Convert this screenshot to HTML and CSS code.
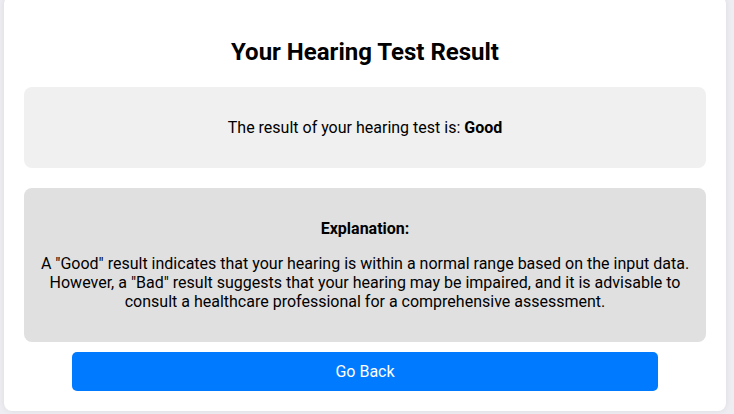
FILE: index.html
```html
<!DOCTYPE html>
<html lang="en">
<head>
<meta charset="utf-8">
<title>Your Hearing Test Result</title>
<link rel="stylesheet" href="styles.css">
</head>
<body>
  <div class="card">
    <h1 class="title">Your Hearing Test Result</h1>
    <div class="box result-box">
      <p>The result of your hearing test is: <strong>Good</strong></p>
    </div>
    <div class="box explain-box">
      <p><strong>Explanation:</strong></p>
      <p>A "Good" result indicates that your hearing is within a normal range based on the input data. However, a "Bad" result suggests that your hearing may be impaired, and it is advisable to consult a healthcare professional for a comprehensive assessment.</p>
    </div>
    <button class="back-btn" type="button">Go Back</button>
  </div>
</body>
</html>
```

FILE: styles.css
```css
html, body {
  margin: 0;
  padding: 0;
}

body {
  background: #eeeef2;
  font-family: Roboto, "Liberation Sans", Arial, sans-serif;
  color: #000;
  padding: 0 8px 0 4px;
  height: 414px;
  box-sizing: border-box;
  overflow: hidden;
}

.card {
  margin-top: -4px;
  background: #fff;
  border-radius: 8px;
  box-shadow: 0 0 6px rgba(0, 0, 0, 0.08);
  padding: 42px 20px 20px;
  display: flex;
  flex-direction: column;
  align-items: center;
}

.title {
  margin: 0 0 21px;
  font-size: 24px;
  font-weight: 700;
  line-height: 28px;
  text-align: center;
}

.box {
  align-self: stretch;
  border-radius: 8px;
  padding: 15px;
  text-align: center;
  font-size: 16px;
  line-height: 19px;
}

.box p {
  margin: 16px 0;
}

.result-box {
  background: #f0f0f0;
  margin-bottom: 20px;
}

.explain-box {
  background: #e0e0e0;
  padding: 15px 12px;
}

.back-btn {
  margin-top: 10px;
  width: 586px;
  height: 39px;
  border: none;
  border-radius: 5px;
  background: #007bff;
  color: #fff;
  font-family: Roboto, "Liberation Sans", Arial, sans-serif;
  font-size: 16px;
  cursor: pointer;
}
```
